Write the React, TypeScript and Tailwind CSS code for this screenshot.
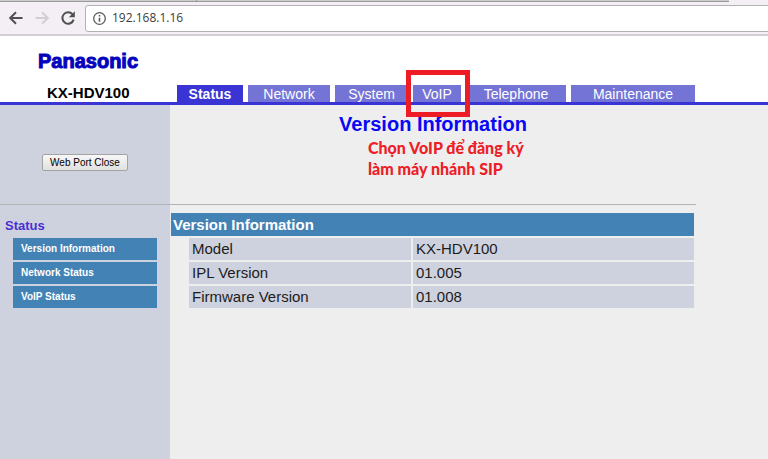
import React from "react";

type Tab = { label: string; width: string; active?: boolean; marked?: boolean };

const tabs: Tab[] = [
  { label: "Status", width: "w-[66px]", active: true },
  { label: "Network", width: "w-[82px]" },
  { label: "System", width: "w-[73px]" },
  { label: "VoIP", width: "w-[48px]", marked: true },
  { label: "Telephone", width: "w-[100px]" },
  { label: "Maintenance", width: "w-[124px]" },
];

const menu = ["Version Information", "Network Status", "VoIP Status"];

const rows: [string, string][] = [
  ["Model", "KX-HDV100"],
  ["IPL Version", "01.005"],
  ["Firmware Version", "01.008"],
];

function BrowserBar() {
  return (
    <div className="border-b-2 border-[#d0ced1] bg-[#f3eff4]">
      <div className="flex h-[2px]">
        <div className="w-[196px] border-b border-[#9b9b9b] bg-[#cccccc]" />
        <div className="w-[533px] border-b border-l border-[#9b9b9b] bg-[#cccccc]" />
      </div>
      <div className="flex h-8 items-center pt-1 pb-1">
        <button aria-label="Back" className="ml-2 flex h-4 w-4 items-center justify-center">
          <svg width="16" height="16" viewBox="0 0 16 16" fill="none" stroke="#505050" strokeWidth="2">
            <path d="M14.5 8H2.5M8 2.2L2.2 8L8 13.8" />
          </svg>
        </button>
        <button aria-label="Forward" className="ml-[10px] flex h-4 w-4 items-center justify-center">
          <svg width="16" height="16" viewBox="0 0 16 16" fill="none" stroke="#d2cfd3" strokeWidth="2">
            <path d="M1.5 8H13.5M8 2.2L13.8 8L8 13.8" />
          </svg>
        </button>
        <button aria-label="Reload" className="ml-[10px] flex h-4 w-4 items-center justify-center">
          <svg width="16" height="16" viewBox="0 0 16 16" fill="none">
            <path d="M13.6 9.6A5.7 5.7 0 1 1 12.4 4.2" stroke="#505050" strokeWidth="2" />
            <path d="M14.8 1.2V7.2H8.8Z" fill="#505050" />
          </svg>
        </button>
        <label className="-mr-2 ml-[9px] flex h-[27px] flex-1 items-center rounded-[3px] border border-[#b3b1b4] bg-white pl-[7px]">
          <svg width="13" height="13" viewBox="0 0 13 13" fill="none" stroke="#5a5a5a">
            <circle cx="6.5" cy="6.5" r="5.8" strokeWidth="1.3" />
            <path d="M6.5 5.7V9.8M6.5 3V4.5" strokeWidth="1.6" />
          </svg>
          <input
            aria-label="Address"
            defaultValue="192.168.1.16"
            className="ml-[6px] min-w-0 flex-1 bg-transparent font-['Open_Sans',sans-serif] text-[12px] leading-4 text-[#3c3c3c] outline-none"
          />
        </label>
      </div>
    </div>
  );
}

function Header() {
  return (
    <header className="flex h-[69px] items-end border-b-[3px] border-[#3a34d4] bg-white">
      <div className="w-[177px] shrink-0">
        <div className="pl-[38px] text-[20px] leading-6 font-bold text-[#0404bd] [-webkit-text-stroke:1px_#0404bd]">
          Panasonic
        </div>
        <div className="mt-[11px] pl-[47px] text-[15px] leading-[18px] font-bold text-black">KX-HDV100</div>
      </div>
      <nav className="flex gap-[5px]">
        {tabs.map((t) => (
          <div key={t.label} className={`relative ${t.width}`}>
            <a
              href="#"
              className={`block h-[17px] text-center text-[14px] leading-[19px] text-white ${
                t.active ? "bg-[#3a34d4] font-bold" : "bg-[#7474d6]"
              }`}
            >
              {t.label}
            </a>
            {t.marked && (
              <div className="absolute -top-[15px] -right-[9px] -bottom-[15px] -left-[7px] z-10 border-[5px] border-[#ee1c25]" />
            )}
          </div>
        ))}
      </nav>
    </header>
  );
}

export default function App() {
  return (
    <div className="flex min-h-screen flex-col overflow-x-hidden bg-[#eeeeee] font-['Liberation_Sans',Arial,sans-serif]">
      <BrowserBar />
      <Header />
      <div className="flex flex-1">
        <aside className="w-[170px] shrink-0 bg-[#ced2de]">
          <div className="flex h-[100px] items-center justify-center border-b border-[#b4b4b8] pt-[15px]">
            <button className="h-[17px] w-[86px] rounded-[2px] border border-[#a3a3a3] bg-gradient-to-b from-[#f8f8f8] to-[#e0e0e0] text-[10px] leading-[15px] text-black">
              Web Port Close
            </button>
          </div>
          <h3 className="mt-3 pl-[5px] text-[13px] leading-[18px] font-bold text-[#4a2fd2]">Status</h3>
          <ul className="mt-[3px] mr-[13px] ml-[13px] flex flex-col gap-[2px]">
            {menu.map((m) => (
              <li key={m}>
                <a
                  href="#"
                  className="block bg-[#4282b5] pl-[8px] text-[10px] leading-[22px] font-bold text-white"
                >
                  {m}
                </a>
              </li>
            ))}
          </ul>
        </aside>
        <main className="max-w-[526px] flex-1">
          <div className="h-[100px] border-b border-[#b4b4b4] pt-[6px]">
            <h1 className="text-center text-[20px] leading-[26px] font-bold text-[#0808f4]">
              Version Information
            </h1>
            <p className="ml-[198px] font-['Lato','Noto_Sans',sans-serif] text-[16px] leading-[21px] font-black text-[#ec2027]">
              Chọn VoIP để đăng ký
              <br />
              làm máy nhánh SIP
            </p>
          </div>
          <h2 className="mt-2 mr-[2px] ml-px bg-[#4282b5] pl-[2px] text-[15px] leading-[23px] font-bold text-white">
            Version Information
          </h2>
          <div className="pl-[17px]">
            <table className="w-full table-fixed border-separate border-spacing-[2px] text-left text-[15px] leading-[22px] text-[#1c1c1c]">
              <tbody>
                {rows.map(([k, v]) => (
                  <tr key={k}>
                    <th scope="row" className="w-[222px] bg-[#ced2de] p-0 pl-[3px] font-normal">
                      {k}
                    </th>
                    <td className="bg-[#ced2de] p-0 pl-[3px]">{v}</td>
                  </tr>
                ))}
              </tbody>
            </table>
          </div>
        </main>
      </div>
    </div>
  );
}
